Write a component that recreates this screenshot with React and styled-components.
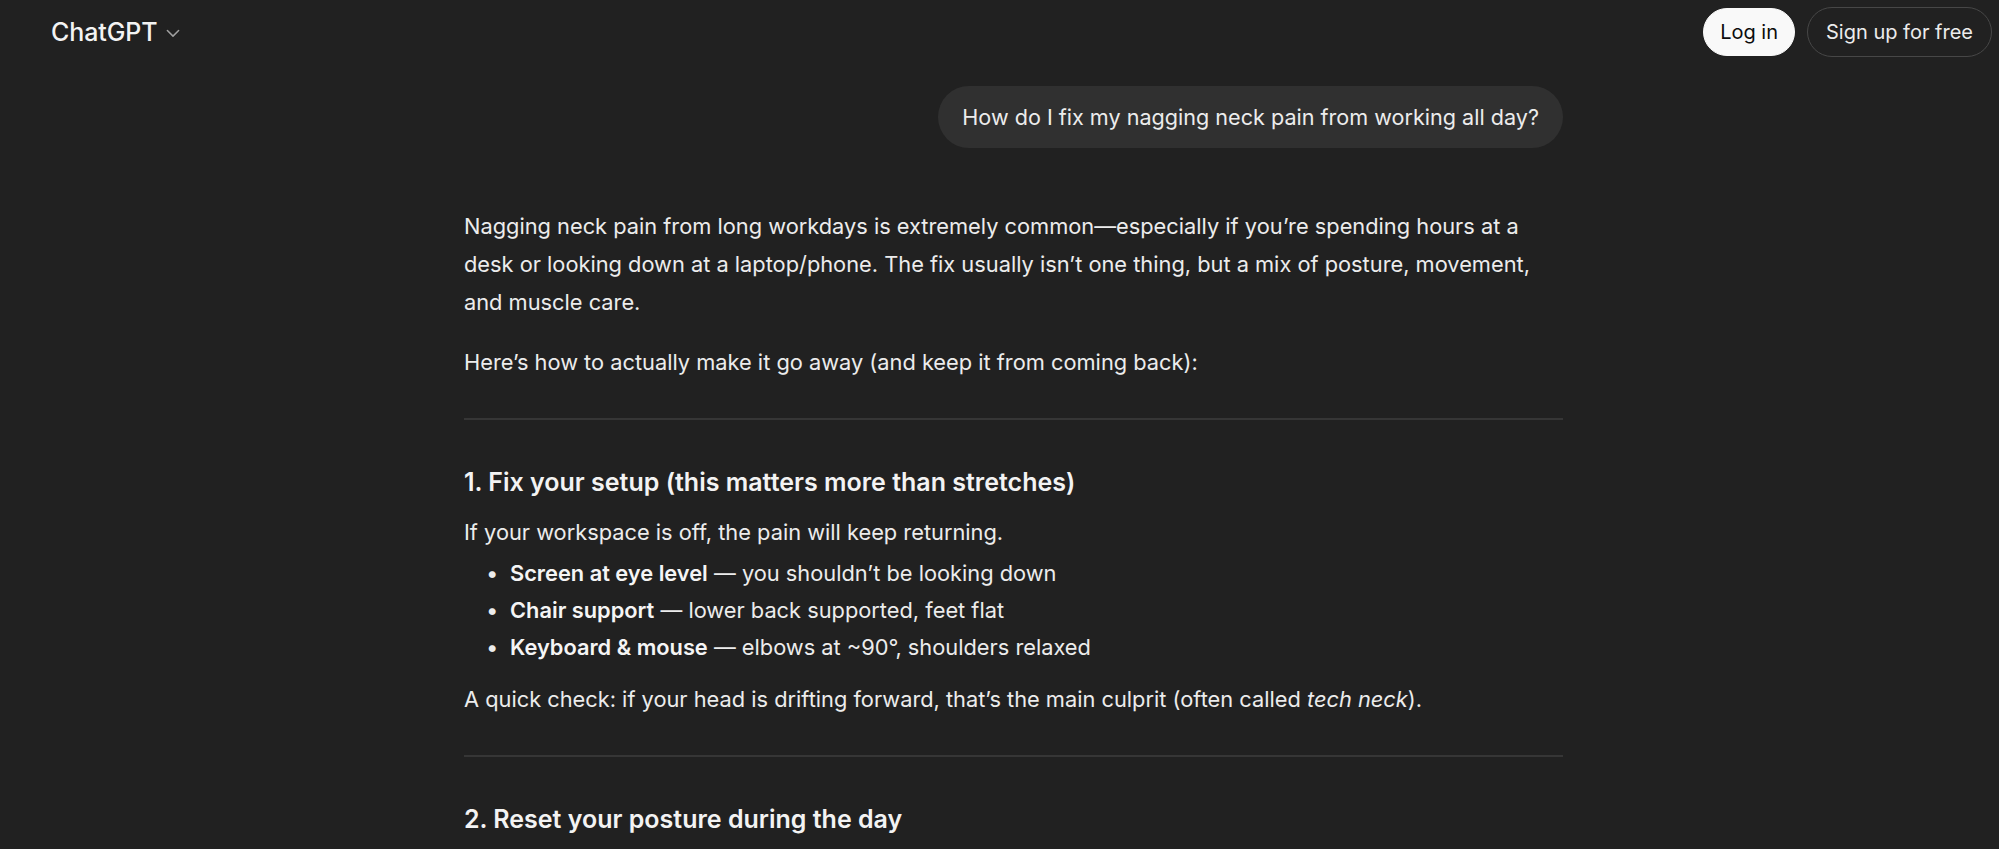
import React from "react";
import styled, { createGlobalStyle } from "styled-components";

const GlobalStyle = createGlobalStyle`
	html, body {
		margin: 0;
		padding: 0;
		background: #212121;
	}
	body {
		font-family: Inter, "Noto Sans", "Liberation Sans", sans-serif;
		color: #ececec;
		-webkit-font-smoothing: antialiased;
	}
`;

const setupTips = [
	{ label: "Screen at eye level", text: "you shouldn’t be looking down" },
	{ label: "Chair support", text: "lower back supported, feet flat" },
	{ label: "Keyboard & mouse", text: "elbows at ~90°, shoulders relaxed" }
];

const ChevronDown = () => (
	<svg width="20" height="20" viewBox="0 0 16 16" fill="none">
		<path
			d="M3.5 6l4.5 4.5L12.5 6"
			stroke="currentColor"
			strokeWidth="1.2"
			strokeLinecap="round"
			strokeLinejoin="round"
		/>
	</svg>
);

const App = () => {
	return (
		<StyledPage>
			<GlobalStyle />
			<Header>
				<Brand>
					ChatGPT
					<span className="chevron">
						<ChevronDown />
					</span>
				</Brand>
				<Actions>
					<PillButton $variant="solid">Log in</PillButton>
					<PillButton $variant="outline">Sign up for free</PillButton>
				</Actions>
			</Header>

			<Thread>
				<Column>
					<UserRow>
						<Bubble>How do I fix my nagging neck pain from working all day?</Bubble>
					</UserRow>

					<Answer>
						<p>
							Nagging neck pain from long workdays is extremely common—especially if
							you’re spending hours at a desk or looking down at a laptop/phone. The fix
							usually isn’t one thing, but a mix of posture, movement, and muscle care.
						</p>
						<p>Here’s how to actually make it go away (and keep it from coming back):</p>

						<Divider />

						<SectionTitle>1. Fix your setup (this matters more than stretches)</SectionTitle>
						<p className="lead">If your workspace is off, the pain will keep returning.</p>
						<TipList>
							{setupTips.map((tip) => (
								<li key={tip.label}>
									<strong>{tip.label}</strong> — {tip.text}
								</li>
							))}
						</TipList>
						<p>
							A quick check: if your head is drifting forward, that’s the main culprit
							(often called <em>tech neck</em>).
						</p>

						<Divider />

						<SectionTitle>2. Reset your posture during the day</SectionTitle>
					</Answer>
				</Column>
			</Thread>
		</StyledPage>
	);
};

const StyledPage = styled.div`
	min-height: 100vh;
	background: #212121;
	overflow: hidden;
`;

const Header = styled.header`
	height: 64px;
	display: flex;
	align-items: center;
	justify-content: space-between;
	padding: 0 7px 0 51px;
`;

const Brand = styled.div`
	display: flex;
	align-items: center;
	gap: 6px;
	font-size: 25px;
	font-weight: 500;
	color: #f3f3f3;
	letter-spacing: -0.1px;

	.chevron {
		display: flex;
		color: #a0a0a0;
		margin-top: 2px;
	}
`;

const Actions = styled.div`
	display: flex;
	align-items: center;
	gap: 12px;
`;

const PillButton = styled.button`
	height: ${(p) => (p.$variant === "solid" ? "48px" : "50px")};
	padding: 0 ${(p) => (p.$variant === "solid" ? "16px" : "18px")};
	border-radius: 999px;
	font-family: inherit;
	font-size: 20px;
	font-weight: 400;
	cursor: pointer;
	background: ${(p) => (p.$variant === "solid" ? "#f9f9f9" : "transparent")};
	color: ${(p) => (p.$variant === "solid" ? "#0d0d0d" : "#ececec")};
	border: 1px solid ${(p) => (p.$variant === "solid" ? "#f9f9f9" : "#474747")};
`;

const Thread = styled.main`
	display: flex;
	justify-content: center;
	padding-left: 28px;
`;

const Column = styled.div`
	width: 1099px;
`;

const UserRow = styled.div`
	display: flex;
	justify-content: flex-end;
	margin-top: 22px;
`;

const Bubble = styled.div`
	background: #303030;
	border-radius: 999px;
	padding: 0 24px;
	height: 62px;
	line-height: 62px;
	font-size: 21.6px;
	color: #ececec;
`;

const Answer = styled.div`
	margin-top: 59px;
	font-size: 21.8px;
	line-height: 38px;
	color: #ececec;

	p {
		margin: 0 0 22px;
	}

	p.lead {
		margin-bottom: 4px;
	}

	strong {
		font-weight: 600;
		color: #f5f5f5;
	}
`;

const Divider = styled.hr`
	border: none;
	height: 2px;
	background: #363636;
	margin: 37px 0 42px;
`;

const SectionTitle = styled.h3`
	margin: 0 0 11px;
	font-size: 25px;
	line-height: 40px;
	font-weight: 600;
	color: #f3f3f3;
`;

const TipList = styled.ul`
	margin: 0 0 14px;
	padding-left: 46px;
	list-style: none;

	li {
		line-height: 37px;
	}

	li::before {
		content: "•";
		display: inline-block;
		width: 24px;
		margin-left: -24px;
		font-size: 22px;
	}
`;

export default App;
